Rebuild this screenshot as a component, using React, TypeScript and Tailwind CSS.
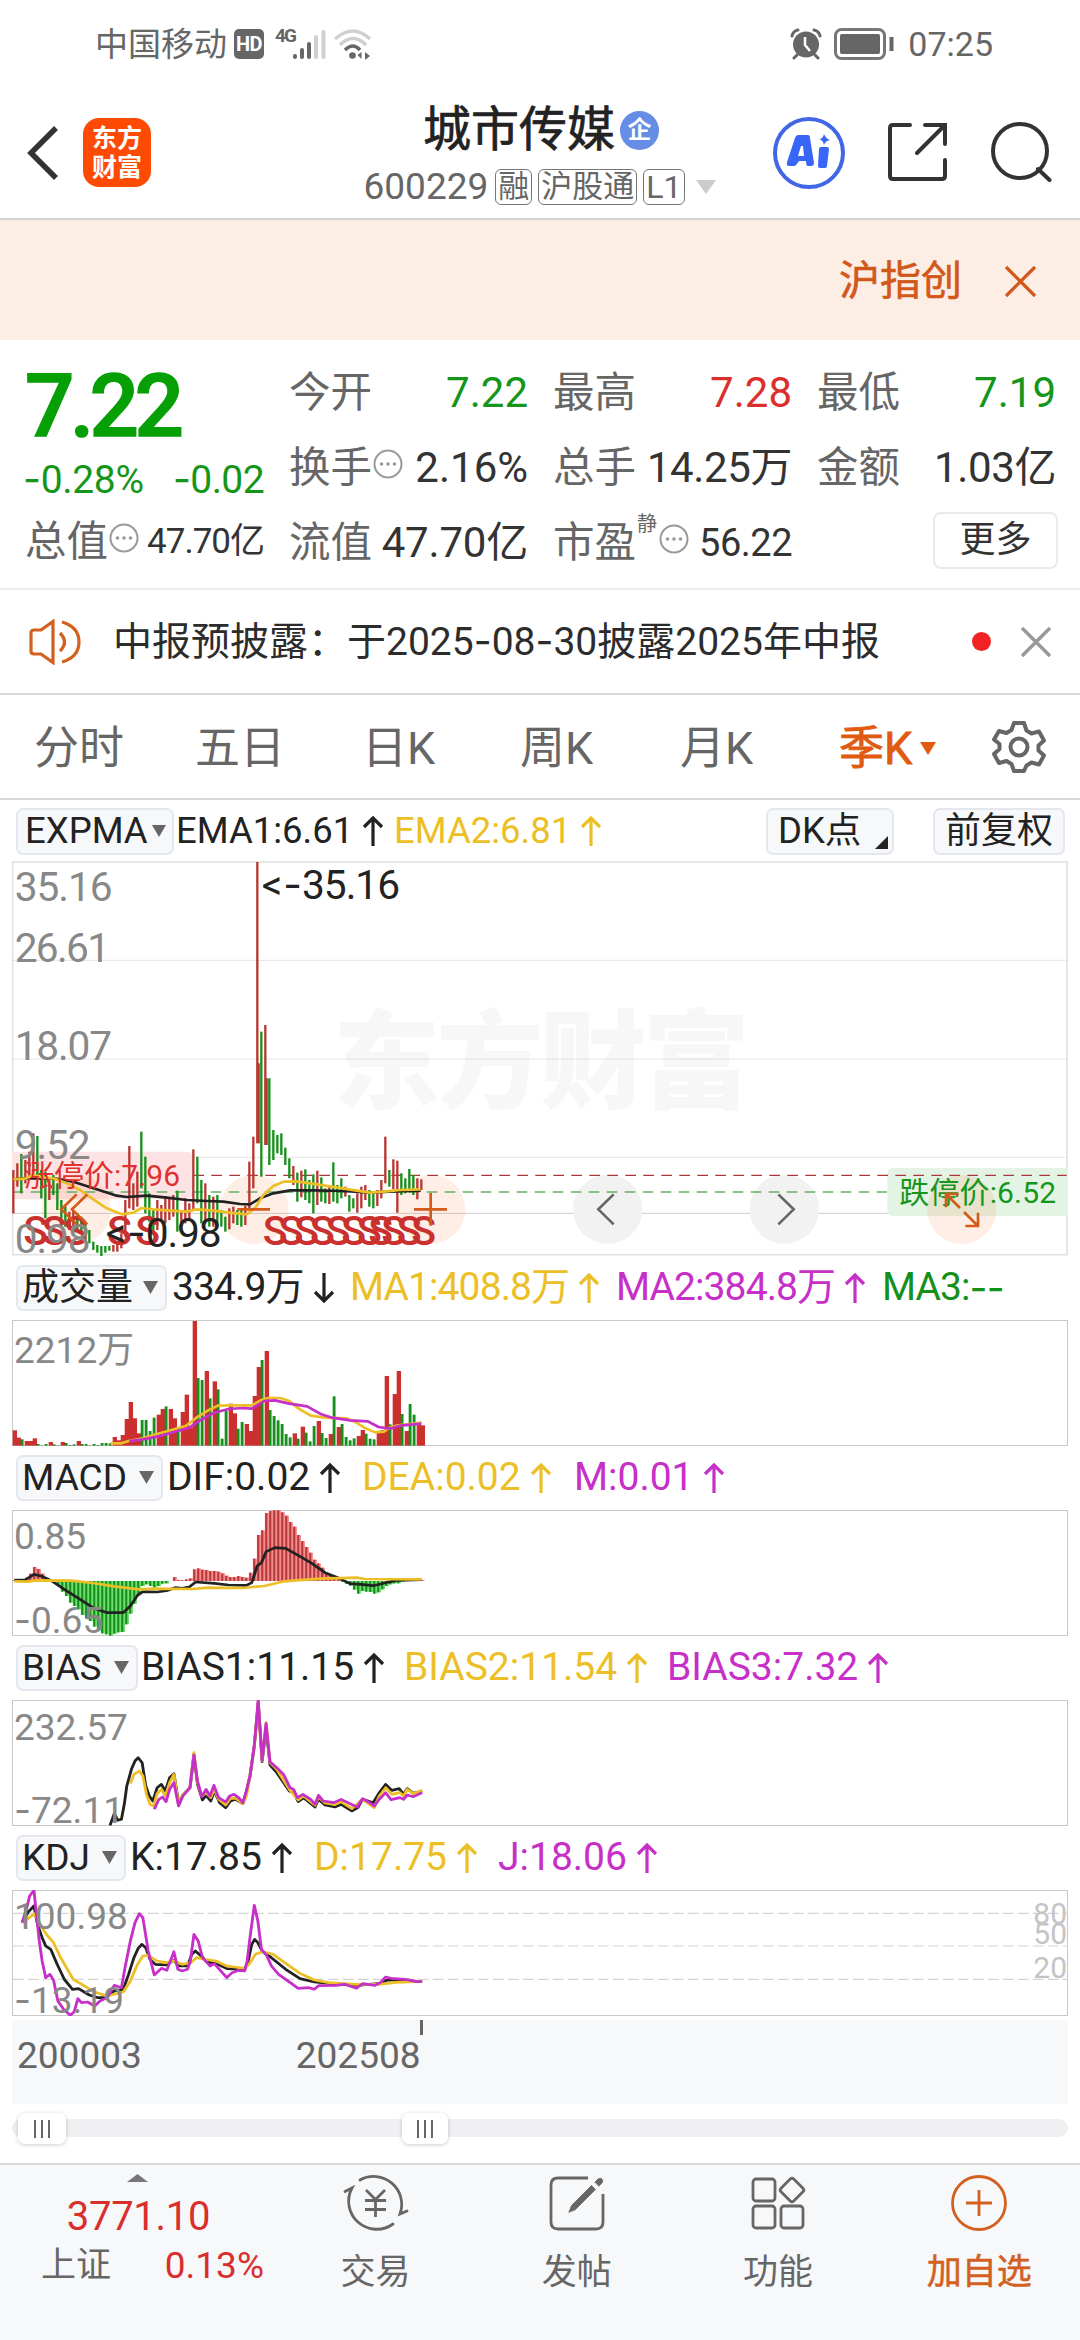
import React from "react";

const RED = "#c9302e";
const GREEN = "#15901a";
const YELLOW = "#ecbf27";
const PURPLE = "#c62fc8";
const BLACK = "#222222";

// quarterly candles: colour, high, low (chart units, 3 per pixel)
const CANDLES =
  "r960-1090 r940-1010 g912-1030 r930-1000 r905-985 r850-980 g858-985 g960-1045 g965-1105 r985-1050 g975-1035 g1000-1080 g1050-1130 g1070-1130 r1085-1140 r1080-1130 g1090-1140 g1100-1150 g1120-1170 g1140-1180 g1175-1200 g1185-1208 g1188-1218 g1188-1208 g1188-1202 r1185-1205 r1175-1205 r1150-1195 r1050-1160 r888-1075 r1000-1080 r965-1070 g845-1015 g920-1090 g1030-1115 g1080-1150 r1050-1140 r1065-1115 r1038-1120 r1045-1110 r1035-1100 g1022-1145 r1080-1130 r1045-1120 r1060-1110 r898-1080 g920-1060 g990-1120 r1000-1110 g1035-1130 r1040-1130 g1035-1125 g1080-1130 g1100-1145 r1075-1138 r1070-1120 g1080-1125 g1075-1130 r1068-1125 r935-1080 r860-1015 r36-880 g545-980 r525-885 g685-945 g840-930 g855-910 g850-915 g893-945 g925-985 r948-1005 g968-1055 r962-1042 g958-1050 g990-1060 g973-1090 r962-1065 g982-1055 g1015-1060 r1005-1062 g937-1055 g1005-1060 g985-1045 r1010-1040 g1035-1085 g1045-1075 r1030-1088 r1010-1075 r1005-1050 g1020-1070 g1030-1075 r1020-1068 r990-1045 r860-1000 g960-1010 r928-1018 r932-1088 g970-1035 g985-1030 g957-1018 g975-1035 r985-1048 r988-1020"
    .split(" ")
    .map((c) => {
      const [high, low] = c.slice(1).split("-").map(Number);
      return { up: c[0] === "r", high, low };
    });

const VOLUMES =
  "r508 r530 g535 r540 r540 r532 g549 g553 g549 r543 g550 g553 r543 g546 g552 g550 r540 g549 g549 g553 g549 g552 g546 g546 g547 r528 r538 r522 r474 r423 r472 r517 g477 g477 g510 g470 r461 r444 g436 r444 r472 g500 r453 r401 r500 r180 g351 g357 r330 g412 r361 g385 g533 g450 r428 r457 g503 g483 r489 r510 r405 r318 g297 r270 g447 g465 g478 g489 g519 g529 r517 g533 r497 g515 g541 g495 r480 g516 g531 r519 g406 r498 g489 g528 g538 g532 r525 r507 g518 g533 g535 r512 r507 r345 g490 r399 r330 g459 r510 g429 g461 r492 r493"
    .split(" ")
    .map((v) => ({ up: v[0] === "r", top: Number(v.slice(1)) }));

const MACD_BARS = [
  958, 956, 955, 950, 938, 918, 924, 938, 950, 956, 965, 975, 992, 1005, 1025, 1035, 1045, 1062, 1072, 1080, 1097, 1110,
  1117, 1120, 1124, 1118, 1114, 1113, 1090, 1058, 1028, 1000, 975, 970, 975, 980, 975, 968, 967, 960, 948, 957, 958, 955,
  952, 925, 922, 926, 927, 930, 930, 932, 937, 944, 948, 948, 945, 948, 950, 935, 893, 822, 808, 756, 750, 748, 748, 754,
  764, 783, 797, 822, 840, 858, 875, 896, 907, 920, 935, 942, 948, 955, 962, 968, 974, 986, 998, 990, 992, 993, 998, 994,
  985, 975, 970, 967, 967, 962, 958, 958, 958, 958, 958,
];

const EMA1 =
  "40,988 75,985 110,985 160,985 220,995 290,1018 350,1037 380,1041 440,1037 500,1043 560,1050 620,1053 670,1055 720,1062 750,1063 780,1045 820,1030 870,1021 940,1021 1030,1023 1110,1028 1180,1024 1262,1022";
const EMA2 =
  "40,988 75,986 100,975 125,982 160,985 200,1000 240,1020 280,1048 320,1075 365,1093 400,1088 425,1074 460,1078 510,1082 560,1085 590,1078 640,1082 680,1087 740,1093 765,1075 790,1035 820,1008 850,995 890,994 950,1003 1010,1012 1070,1022 1110,1028 1160,1024 1200,1020 1262,1018";
const VOL_MA1 =
  "310,547 340,547 360,540 400,532 430,522 480,507 520,495 550,470 580,450 610,434 650,433 705,433 730,418 750,411 785,411 810,420 835,442 870,464 910,470 970,472 995,483 1020,500 1050,514 1075,512 1090,500 1110,494 1140,490 1180,485";
const VOL_MA2 =
  "362,540 400,535 440,527 480,515 530,500 560,478 600,455 640,444 680,441 705,443 740,420 770,418 810,428 860,436 900,460 930,470 980,478 1030,481 1060,498 1090,503 1120,494 1180,488";
const DIF =
  "40,957 70,957 95,940 115,945 145,960 180,985 220,1012 260,1040 300,1055 345,1055 365,1035 385,1003 400,992 440,993 470,988 490,980 510,982 530,978 548,963 600,967 640,972 690,973 705,965 720,915 732,905 745,872 770,860 800,862 830,880 870,905 910,935 950,952 980,968 1010,970 1045,974 1080,965 1110,958 1180,956";
const DEA =
  "40,961 80,962 100,958 200,959 260,966 320,976 390,985 430,983 540,984 580,980 680,981 740,975 790,962 830,958 900,953 1000,950 1020,954 1180,955";
const BIAS1 =
  "308,553 320,518 330,538 340,535 348,490 355,435 368,385 378,360 387,350 398,365 408,435 418,465 428,480 440,440 452,430 463,450 475,410 487,398 500,485 512,462 532,440 543,340 553,430 567,477 577,463 590,480 600,450 615,485 632,500 645,480 660,475 680,488 690,450 700,405 712,315 723,185 734,362 745,260 756,372 775,395 810,450 822,455 835,482 850,470 882,498 892,475 910,492 938,498 955,490 985,510 1002,500 1015,475 1045,485 1062,455 1080,430 1097,448 1118,443 1130,460 1140,443 1158,457 1182,450";
const BIAS2 =
  "365,428 375,400 390,390 400,405 410,460 420,490 430,495 440,458 452,445 463,465 475,425 487,400 500,490 512,460 532,440 543,335 553,425 565,465 577,455 590,470 600,445 612,475 632,492 645,472 660,472 680,488 690,465 700,405 712,315 723,182 734,360 745,245 756,365 775,385 810,445 835,477 850,465 882,493 892,468 910,486 938,491 955,482 985,503 1015,475 1048,500 1062,465 1080,440 1097,460 1120,455 1130,465 1140,445 1158,458 1182,448";
const BIAS3 =
  "432,505 445,475 455,468 465,482 475,445 487,425 500,495 512,465 532,440 543,342 553,420 565,467 577,445 588,465 599,433 612,470 632,483 643,465 655,460 668,470 680,485 690,450 700,405 712,315 723,178 734,358 745,248 756,362 775,380 795,402 812,440 822,445 833,470 848,460 870,475 882,490 892,463 905,480 935,485 955,475 980,488 1000,498 1015,473 1035,485 1048,495 1062,475 1080,455 1095,476 1120,470 1130,475 1140,462 1158,467 1182,455";
const KDJ_K =
  "62,845 80,812 95,795 105,850 118,890 128,915 142,925 160,970 180,1015 203,1045 220,1043 250,1062 275,1070 295,1070 320,1050 345,1045 360,1000 375,950 387,922 397,910 408,920 420,955 435,970 465,972 487,958 500,975 525,975 537,940 547,930 560,942 580,962 610,970 635,983 685,985 695,960 705,910 713,895 722,905 735,932 760,950 800,985 840,1013 880,1023 930,1028 998,1033 1060,1028 1085,1017 1120,1018 1182,1022";
const KDJ_D =
  "62,845 75,835 97,818 112,850 130,880 150,905 170,950 205,1015 240,1037 265,1053 300,1065 345,1053 365,1020 385,970 400,945 415,943 440,960 465,965 487,960 510,970 535,965 550,950 575,955 605,960 635,975 685,982 697,970 715,940 735,932 765,940 800,967 840,997 880,1017 920,1025 998,1030 1060,1030 1110,1024 1182,1021";
const KDJ_J =
  "62,845 75,800 83,765 95,748 103,830 110,900 118,960 128,1010 140,1000 150,1018 162,1080 178,1105 197,1123 208,1112 218,1073 228,1085 245,1083 265,1095 280,1080 300,1070 320,1033 340,1040 350,980 365,900 378,845 390,818 400,830 415,930 432,1002 452,982 467,988 487,932 498,985 510,990 525,985 533,960 543,880 555,900 567,950 588,975 600,968 620,992 635,1010 650,995 668,988 685,990 692,960 700,890 712,793 722,840 732,925 745,940 760,975 780,1000 800,1015 835,1042 865,1040 880,1045 892,1034 940,1033 965,1030 998,1042 1015,1028 1050,1033 1065,1025 1080,1008 1095,1012 1140,1016 1165,1022 1182,1022";

// Roboto's hyphen is too short for prices, so it is taken from Inter
function Num({ children }: { children: string }) {
  return (
    <>
      {children.split(/(-)/).map((part, i) =>
        part === "-" ? (
          <span key={i} className="font-['Inter']">
            -
          </span>
        ) : (
          part
        )
      )}
    </>
  );
}

function StatusBar() {
  return (
    <div className="flex h-[88px] items-center justify-between pl-[95px] pr-[87px] text-[#666]">
      <div className="flex items-center">
        <span className="text-[33px] leading-none">中国移动</span>
        <span className="ml-[7px] flex h-[30px] w-[30px] items-center justify-center rounded-[5px] bg-[#666] text-[20px] font-bold leading-none tracking-[-0.5px] text-white">
          HD
        </span>
        <span className="-mt-[17px] ml-[11px] w-[18px] text-[19px] font-bold leading-none tracking-[-2px]">4G</span>
        <svg width="34" height="32" viewBox="0 0 34 32" className="-mt-px" strokeWidth="4" strokeLinecap="round">
          <path d="M2 29v-1M9 29v-7M16 29V16" stroke="#666" />
          <path d="M23 29V9M30.500 29V4" stroke="#d0d0d0" />
        </svg>
        <svg width="40" height="34" viewBox="0 0 40 34" className="ml-[6px]" fill="none" strokeWidth="3.500">
          <path d="M2 12Q20 -4 37 12" stroke="#d0d0d0" />
          <path d="M7 18Q20 5 33 18" stroke="#d0d0d0" />
          <path d="M12 23Q20 15 27 23" stroke="#666" />
          <circle cx="19.500" cy="28.500" r="3.300" fill="#666" />
          <path d="M28.500 25v7l-4-4zM32 33v-8l5 4z" fill="#666" />
        </svg>
      </div>
      <div className="flex items-center">
        <svg width="32" height="32" viewBox="0 0 32 32">
          <circle cx="16" cy="16.500" r="13" fill="#666" />
          <path d="M2 8Q3 3 8 2M30 8Q29 3 24 2M7 27l-3 3M25 27l3 3" stroke="#666" strokeWidth="3" fill="none" strokeLinecap="round" />
          <path d="M15 9v8l5 6" stroke="#fff" strokeWidth="2.500" fill="none" />
        </svg>
        <svg width="62" height="32" viewBox="0 0 62 32" className="ml-[12px]">
          <rect x="1.500" y="1.500" width="49" height="29" rx="6" fill="none" stroke="#777" strokeWidth="3" />
          <rect x="6" y="6" width="40" height="20" rx="2" fill="#666" />
          <path d="M57.500 9v14" stroke="#666" strokeWidth="4" />
        </svg>
        <span className="ml-[12px] text-[34px] leading-none">07:25</span>
      </div>
    </div>
  );
}

function Header() {
  return (
    <div className="flex h-[132px] border-b-2 border-[#d3d3d6]">
      <div className="flex w-[308px] pl-[27px]">
        <svg width="32" height="56" viewBox="0 0 32 56" className="mt-[37px]">
          <path d="M29 3L4 28l25 25" fill="none" stroke="#333" strokeWidth="5.500" />
        </svg>
        <div className="ml-[24px] mt-[30px] flex h-[69px] w-[68px] flex-col items-center justify-center rounded-[16px] bg-[#fd4a05] text-[25px] font-bold leading-[29px] text-white">
          <span>东方</span>
          <span>财富</span>
        </div>
      </div>
      <div className="flex flex-1 flex-col items-center">
        <div className="ml-[2px] mt-[18px] flex items-center">
          <span className="text-[48px] leading-none text-[#222] [-webkit-text-stroke:0.7px_#222]">城市传媒</span>
          <span className="ml-[5px] flex h-[39px] w-[39px] items-center justify-center rounded-full bg-[#658de6] text-[24px] font-bold leading-none text-white">
            企
          </span>
        </div>
        <div className="mt-[14px] flex items-center whitespace-nowrap text-[#666]">
          <span className="text-[37px] leading-none">600229</span>
          <span className="ml-[7px] flex h-[36px] items-center rounded-[6px] border border-[#777] px-[2px] text-[31px] leading-none">融</span>
          <span className="ml-[6px] flex h-[36px] items-center rounded-[6px] border border-[#777] px-[2px] text-[31px] leading-none">沪股通</span>
          <span className="ml-[6px] flex h-[36px] items-center rounded-[6px] border border-[#777] px-[2px] text-[32px] leading-none">L1</span>
          <svg width="22" height="14" viewBox="0 0 22 14" className="ml-[10px]">
            <path d="M1 0h20L11 14z" fill="#ccc" />
          </svg>
        </div>
      </div>
      <div className="flex w-[308px]">
        <svg width="72" height="72" viewBox="0 0 72 72" className="ml-px mt-[29px]">
          <circle cx="36" cy="36" r="34" fill="none" stroke="#4267e4" strokeWidth="4" />
          <path d="M25 18h10q2 0 2 3l4 25q0 3-3 3h-3q-2 0-2-5h-7q-3 5-5 5h-5q-3 0-2-4l8-24q1-3 3-3zM28 29l-3 10h6l-1-10z" fill="#3a66f8" fillRule="evenodd" />
          <path d="M48 30h6q2 0 2 2l-2 17q0 2-2 2h-5q-2 0-2-2l1-17q0-2 2-2zM51 17q2 5 6 6q-5 1-6 5q-1-5-5-6q4 0 5-5z" fill="#3a66f8" />
        </svg>
        <svg width="60" height="60" viewBox="0 0 60 60" className="ml-[42px] mt-[34px]" fill="none" stroke="#333" strokeWidth="4" strokeLinecap="round">
          <path d="M23 3H6Q3 3 3 6v48q0 3 3 3h49q3 0 3-3V38M38 3h20v19M57 4L30 31" />
        </svg>
        <svg width="62" height="62" viewBox="0 0 62 62" className="ml-[43px] mt-[33px]" fill="none" stroke="#333" strokeWidth="4" strokeLinecap="round">
          <circle cx="30" cy="30" r="27" />
          <path d="M48 48l11.500 11" />
        </svg>
      </div>
    </div>
  );
}

function Banner() {
  return (
    <div className="flex h-[120px] items-center justify-end bg-[#fceee5] pr-[43px] pt-[2px] text-[#d2581a]">
      <span className="text-[41px] leading-none [-webkit-text-stroke:0.6px_#d2581a]">沪指创</span>
      <svg width="33" height="33" viewBox="0 0 33 33" className="ml-[42px]">
        <path d="M2 2l29 29M31 2L2 31" stroke="#d2581a" strokeWidth="3.200" />
      </svg>
    </div>
  );
}

function Dots() {
  return (
    <svg width="30" height="30" viewBox="0 0 30 30" className="-mt-[8px] ml-px shrink-0">
      <circle cx="15" cy="15" r="13.500" fill="none" stroke="#999" strokeWidth="2" />
      <circle cx="8.500" cy="15" r="1.800" fill="#999" />
      <circle cx="15" cy="15" r="1.800" fill="#999" />
      <circle cx="21.500" cy="15" r="1.800" fill="#999" />
    </svg>
  );
}

type CellProps = { label: string; value: string; valueClass: string; dots?: boolean; sup?: string };

function Cell({ label, value, valueClass, dots, sup }: CellProps) {
  return (
    <div className="flex items-center whitespace-nowrap">
      <span className="text-[41.500px] leading-none text-[#666]">{label}</span>
      {sup && <span className="-mt-[38px] ml-px w-[21px] text-[20px] leading-none text-[#666]">{sup}</span>}
      {dots && <Dots />}
      <span className={`ml-auto leading-none ${valueClass}`}>{value}</span>
    </div>
  );
}

function Quote() {
  return (
    <div className="flex h-[250px] border-b-2 border-[#ececee]">
      <div className="w-[264px] pl-[25px]">
        <div className="flex h-[114px] items-center pt-[18px] text-[87px] font-medium leading-none tracking-[-4.500px] text-[#06a006] [-webkit-text-stroke:1.500px_#06a006]">
          7.22
        </div>
        <div className="flex h-[50px] items-center justify-between text-[39px] leading-none tracking-[-0.300px] text-[#15961a]">
          <span className="-ml-[2px]">
            <Num>-0.28%</Num>
          </span>
          <span className="tracking-[-0.600px]">
            <Num>-0.02</Num>
          </span>
        </div>
        <div className="grid h-[75px]">
          <Cell label="总值" value="47.70亿" valueClass="text-[35px] tracking-[-1px] text-[#333]" dots />
        </div>
      </div>
      <div className="ml-[25px] mt-[15px] grid h-[225px] w-[767px] grid-cols-3 grid-rows-3 gap-x-[25px]">
        <Cell label="今开" value="7.22" valueClass="text-[42px] text-[#15961a]" />
        <Cell label="最高" value="7.28" valueClass="text-[42px] text-[#dc2f2c]" />
        <Cell label="最低" value="7.19" valueClass="text-[42px] text-[#15961a]" />
        <Cell label="换手" value="2.16%" valueClass="text-[42px] text-[#333]" dots />
        <Cell label="总手" value="14.25万" valueClass="text-[42px] tracking-[-0.400px] text-[#333]" />
        <Cell label="金额" value="1.03亿" valueClass="text-[42px] tracking-[-0.400px] text-[#333]" />
        <Cell label="流值" value="47.70亿" valueClass="text-[42px] tracking-[-0.200px] text-[#333]" />
        <Cell label="市盈" value="56.22" valueClass="text-[38px] tracking-[-0.500px] text-[#333]" dots sup="静" />
        <div className="-mr-[2px] -mt-[5px] ml-auto flex h-[57px] w-[125px] items-center justify-center self-center rounded-[8px] border-2 border-[#e8ebeb] text-[36px] leading-none text-[#333]">
          更多
        </div>
      </div>
    </div>
  );
}

function Notice() {
  return (
    <div className="flex h-[105px] items-center border-b-2 border-[#dadadc]">
      <svg width="52" height="46" viewBox="0 0 52 46" className="ml-[29px] shrink-0" fill="none" stroke="#d4601f" strokeWidth="3.200">
        <path d="M24 2.500v41L12 35H5q-3 0-3-3V14q0-3 3-3h7zM31 14q9 9 0 18M33 3q17 5 17 20T33 43" />
      </svg>
      <span className="ml-[32px] whitespace-nowrap text-[39px] leading-none text-[#2c2c2c]">
        <Num>中报预披露：于2025-08-30披露2025年中报</Num>
      </span>
      <span className="ml-auto h-[19px] w-[19px] rounded-full bg-[#f02222]" />
      <svg width="32" height="32" viewBox="0 0 32 32" className="ml-[29px] mr-[28px]">
        <path d="M2 2l28 28M30 2L2 30" stroke="#999" strokeWidth="3.500" />
      </svg>
    </div>
  );
}

const PERIODS = [
  { name: "分时", width: 161 },
  { name: "五日", width: 167 },
  { name: "日K", width: 158 },
  { name: "周K", width: 160 },
  { name: "月K", width: 159 },
];

function Periods() {
  return (
    <div className="flex h-[105px] items-center border-b-2 border-[#dadadc] pl-[34px] pt-[3px] text-[45px] leading-none text-[#666]">
      {PERIODS.map((period) => (
        <span key={period.name} style={{ width: period.width }}>
          {period.name}
        </span>
      ))}
      <span className="text-[#e05a10] [-webkit-text-stroke:0.8px_#e05a10]">季K</span>
      <svg width="16" height="13" viewBox="0 0 16 13" className="ml-[8px]">
        <path d="M0 0h16L8 13z" fill="#e05a10" />
      </svg>
      <svg width="54" height="54" viewBox="0 0 54 54" className="-mt-[3px] ml-auto mr-[34px]" fill="none" stroke="#666" strokeWidth="4" strokeLinejoin="round">
        <path d="M22 3h10l2.500 7.500 5 3 7.500-2 5 9-5.500 5v5l5.500 5-5 9-7.500-2-5 3L32 51H22l-2.500-7-5-3-7.500 2-5-9L7.500 29v-5L2 19.500l5-8.500 7.500 2 5-3z" />
        <circle cx="27" cy="27" r="8.500" />
      </svg>
    </div>
  );
}

function Arrow({ down }: { down?: boolean }) {
  return (
    <svg width="22" height="32" viewBox="0 0 22 32" className={`ml-[9px] shrink-0 ${down ? "rotate-180" : ""}`} fill="none" stroke="currentColor" strokeWidth="3.200">
      <path d="M11 31V3M2 12L11 3l9 9" />
    </svg>
  );
}

type Reading = { text: string; at: number; color: string; arrow?: "up" | "down" };
type IndicatorBarProps = { name: string; width: number; readings: Reading[]; tight?: boolean };

// `at` is where the reading starts, `width` is that of the selector button
function IndicatorBar({ name, width, readings, tight }: IndicatorBarProps) {
  return (
    <div className="flex h-[64px] items-center whitespace-nowrap pb-[1px] pl-[16px] text-[39px] leading-none">
      <div className="flex h-[46px] shrink-0 items-center justify-between rounded-[7px] border-2 border-[#e4e8ee] bg-[#f7f8fa] pl-[4px] pr-[7px] text-[37px] text-[#222]" style={{ width }}>
        {name}
        <svg width="15" height="13" viewBox="0 0 15 13">
          <path d="M0 0h15L7.500 13z" fill="#666" />
        </svg>
      </div>
      {readings.map((r, i) => (
        <div
          key={r.text}
          className={`flex shrink-0 items-center ${tight ? "tracking-[-0.900px]" : ""}`}
          style={{ color: r.color, marginLeft: i === 0 ? r.at - 16 - width : 0, width: i < readings.length - 1 ? readings[i + 1].at - r.at : "auto" }}
        >
          <Num>{r.text}</Num>
          {r.arrow && <Arrow down={r.arrow === "down"} />}
        </div>
      ))}
    </div>
  );
}

function MainChart() {
  return (
    <div className="px-[12px]">
      <svg width="1056" height="395" viewBox="36 33 3168 1185" className="block">
        <text x="1000" y="750" textLength="1250" className="text-[320px] font-black" fill="#f7f7f7">
          东方财富
        </text>
        <rect x="38" y="36" width="3163" height="1178" fill="none" stroke="#e2e2e2" strokeWidth="5" />
        <path d="M38 331H3200M38 627H3200M38 922H3200" stroke="#ccc" strokeWidth="3" strokeDasharray="4 4" />
        <path d="M38 1090H3200" stroke="#ccc" strokeWidth="3" />
        <path d="M36 905H560q18 0 18 18V1030q0 18-18 18H36z" fill="#fde3e4" />
        <path d="M3204 954H2680q-18 0-18 18V1080q0 18 18 18H3204z" fill="#e4f4e4" />
        {[229, 762, 1292, 2885].map((x) => (
          <circle key={x} cx={x} cy="1078" r="104" fill="#fd8a4a" fillOpacity="0.14" />
        ))}
        {[1823, 2353].map((x) => (
          <circle key={x} cx={x} cy="1078" r="104" fill="#f2f2f2" />
        ))}
        <path d="M580 976H3200" stroke="#a8383c" strokeWidth="4" strokeDasharray="32 22" />
        <path d="M38 1026H2660" stroke="#63b165" strokeWidth="4" strokeDasharray="32 22" />
        {CANDLES.map((c, i) => (
          <path key={i} d={`M${40 + i * 12} ${c.high}V${c.low}`} stroke={c.up ? "#b93632" : GREEN} strokeWidth="7" />
        ))}
        <path d="M775 640V880M799 685V885" stroke="#b93632" strokeWidth="9" />
        <g fill={RED} className="text-[123px] font-medium">
          <text y="1185" x="70 125 190">
            SSS
          </text>
          <text y="1185" x="321 406">
            SS
          </text>
          <text y="1185" x="788 836 883 930 977 1024 1071 1105 1144 1190 1234">
            SSSSSSSSSSS
          </text>
        </g>
        <g fill="none" strokeWidth="8" strokeLinejoin="round">
          <polyline points={EMA1} stroke={BLACK} />
          <polyline points={EMA2} stroke={YELLOW} />
        </g>
        <text x="72" y="1008" textLength="468" fill="#e0312f" className="text-[90px]">
          涨停价:7.96
        </text>
        <text x="2698" y="1060" textLength="470" fill="#17961c" className="text-[90px]">
          跌停价:6.52
        </text>
        <g fill="#888" className="text-[122px]">
          <text x="44" y="154" textLength="294">35.16</text>
          <text x="44" y="337" textLength="286">26.61</text>
          <text x="44" y="630" textLength="292">18.07</text>
          <text x="44" y="926" textLength="228">9.52</text>
          <text x="44" y="1208" textLength="228">0.98</text>
        </g>
        <g fill="#222" className="text-[122px]">
          <text x="785" y="148">
            &lt;
          </text>
          <text x="850" y="148" className="font-['Inter']">
            -
          </text>
          <text x="906" y="148" textLength="294">
            35.16
          </text>
          <text x="317" y="1192">
            &lt;
          </text>
          <text x="381" y="1192" className="font-['Inter']">
            -
          </text>
          <text x="437" y="1192" textLength="228">
            0.98
          </text>
        </g>
        <g fill="none" stroke="#d35a18" strokeWidth="8">
          <path d="M230 1033l-46 45 46 45M262 1033l-46 45 46 45M712 1078h98M1242 1078h99M1292 1029v98" />
          <path d="M2838 1072v-40h38M2838 1032l42 42M2934 1088v40h-38M2934 1128l-42-42" />
        </g>
        <path d="M1841 1033l-46 45 46 45M2335 1033l46 45-46 45" fill="none" stroke="#666" strokeWidth="8" />
      </svg>
    </div>
  );
}

type SubChartProps = { top: string; topClass: string; bottom?: string; offset: number; children: React.ReactNode };

// the lower panels share one x scale; offset is the y origin of the panel's data
function SubChart({ top, topClass, bottom, offset, children }: SubChartProps) {
  return (
    <div className="relative mx-[12px] h-[126px] text-[37px] leading-none text-[#888]">
      <svg width="1056" height="126" viewBox={`33.6 ${offset} 2956.8 378`} preserveAspectRatio="none" className="block">
        <rect x="35" y={offset + 1.5} width="2954" height="375" fill="none" stroke="#c8c8c8" strokeWidth="3" />
        {children}
      </svg>
      <span className={`absolute left-[2px] ${topClass}`}>{top}</span>
      {bottom && (
        <span className="absolute -bottom-[3px] left-[2px]">
          <Num>{bottom}</Num>
        </span>
      )}
    </div>
  );
}

function Line({ points, color }: { points: string; color: string }) {
  return <polyline points={points} fill="none" stroke={color} strokeWidth="8" strokeLinejoin="round" />;
}

function Handle({ className }: { className: string }) {
  return (
    <div className={`absolute -top-[6px] flex h-[31px] items-center justify-center gap-[5px] rounded-[7px] bg-white shadow-[0_1px_4px_rgba(0,0,0,0.2)] ${className}`}>
      <i className="h-[18px] w-[2px] bg-[#666]" />
      <i className="h-[18px] w-[2px] bg-[#666]" />
      <i className="h-[18px] w-[2px] bg-[#666]" />
    </div>
  );
}

function TimeAxis() {
  return (
    <>
      <div className="relative mx-[12px] mt-[4px] flex h-[84px] pl-[5px] pt-[17px] text-[37px] leading-none text-[#666]">
        <div className="absolute inset-0 -z-10 bg-[#f7f8fa]" />
        <span>200003</span>
        <span className="ml-[154px]">202508</span>
        <i className="absolute left-[408px] top-0 h-[15px] w-[3px] bg-[#666]" />
      </div>
      <div className="relative mx-[12px] mt-[15px] h-[18px] rounded-full bg-[#f0f0f2]">
        <Handle className="left-[6px] w-[48px]" />
        <Handle className="left-[390px] w-[46px]" />
      </div>
    </>
  );
}

function TabItem({ label, active, children }: { label: string; active?: boolean; children: React.ReactNode }) {
  return (
    <div className={`flex flex-1 flex-col items-center pt-[8px] ${active ? "text-[#d2601f]" : "text-[#666]"}`}>
      <svg width="66" height="62" viewBox="0 0 66 62" fill="none" stroke="currentColor" strokeWidth="2.800" strokeLinecap="round">
        {children}
      </svg>
      <span className={`mt-[20px] text-[35px] leading-none ${active ? "[-webkit-text-stroke:0.5px_#d2601f]" : ""}`}>{label}</span>
    </div>
  );
}

function TabBar() {
  return (
    <div className="mt-[26px] flex h-[178px] border-t-2 border-[#d8d8da] bg-[#f7f8fa]">
      <div className="flex w-[275px] flex-col items-center pt-[9px]">
        <svg width="21" height="8" viewBox="0 0 21 8">
          <path d="M0 8L10.500 0 21 8z" fill="#77777b" />
        </svg>
        <span className="ml-[2px] mt-[15px] text-[40px] leading-none tracking-[-0.300px] text-[#d92f2c]">3771.10</span>
        <div className="mt-[10px] flex w-full items-center justify-between pl-[41px] pr-[11px] text-[35px] leading-none">
          <span className="text-[#666]">上证</span>
          <span className="text-[37px] text-[#d92f2c]">0.13%</span>
        </div>
      </div>
      <TabItem label="交易">
        <path d="M17 7a28 28 0 0 1 40 34l7-3M50 51A28 28 0 0 1 9 15l-7 3.500" />
        <path d="M23 17l9.500 9.500 9.500-9.500M22 27.500h21M22 36.500h21M32.500 27v17" strokeLinecap="butt" />
      </TabItem>
      <TabItem label="发帖">
        <path d="M44 5H14q-7 0-7 7v37q0 7 7 7h38q7 0 7-7V21" strokeLinecap="butt" />
        <path d="M25 39l2.500-6.500 20-20 4 4-20 20zM51 9l3-3q2.500-1.500 4 0t0 4l-3 3z" fill="currentColor" strokeWidth="0.800" />
      </TabItem>
      <TabItem label="功能">
        <rect x="8" y="6" width="22" height="22" rx="3" />
        <rect x="8" y="33" width="22" height="22" rx="3" />
        <rect x="36" y="33" width="22" height="22" rx="3" />
        <rect x="38" y="8" width="18" height="18" rx="2.500" transform="rotate(45 47 17)" />
      </TabItem>
      <TabItem label="加自选" active>
        <circle cx="33" cy="30" r="26.500" />
        <path d="M33 17v26M20 30h26" strokeLinecap="butt" />
      </TabItem>
    </div>
  );
}

export default function App() {
  return (
    <div className="relative z-0 h-[2340px] w-[1080px] overflow-hidden bg-white font-['Roboto','Noto_Sans_CJK_SC',sans-serif]">
      <StatusBar />
      <Header />
      <Banner />
      <Quote />
      <Notice />
      <Periods />

      <div className="flex h-[61px] items-center whitespace-nowrap pl-[16px] pt-px text-[36.500px] leading-none text-[#222]">
        <div className="flex h-[47px] w-[158px] items-center justify-between rounded-[7px] border-2 border-[#e4e8ee] bg-[#f7f8fa] pl-[7px] pr-[6px]">
          EXPMA
          <svg width="14" height="12" viewBox="0 0 14 12">
            <path d="M0 0h14L7 12z" fill="#666" />
          </svg>
        </div>
        <div className="ml-[2px] flex w-[218px] items-center">
          EMA1:6.61
          <Arrow />
        </div>
        <div className="flex items-center text-[#ecbf27]">
          EMA2:6.81
          <Arrow />
        </div>
        <div className="relative ml-auto flex h-[47px] w-[128px] items-center rounded-[7px] border-2 border-[#e4e8ee] bg-[#f7f8fa] pl-[10px]">
          DK点
          <svg width="13" height="13" viewBox="0 0 13 13" className="absolute bottom-[4px] right-[4px]">
            <path d="M13 0v13H0z" fill="#222" />
          </svg>
        </div>
        <div className="ml-[39px] mr-[15px] flex h-[47px] w-[132px] items-center justify-center rounded-[7px] border-2 border-[#e4e8ee] bg-[#f7f8fa] text-[36px]">
          前复权
        </div>
      </div>
      <MainChart />

      <IndicatorBar
        name="成交量"
        width={151}
        tight
        readings={[
          { text: "334.9万", at: 172, color: BLACK, arrow: "down" },
          { text: "MA1:408.8万", at: 350, color: YELLOW, arrow: "up" },
          { text: "MA2:384.8万", at: 616, color: PURPLE, arrow: "up" },
          { text: "MA3:--", at: 882, color: "#15901a" },
        ]}
      />
      <SubChart top="2212万" topClass="top-[12px]" offset={177}>
        {VOLUMES.map((v, i) => (
          <rect key={i} x={35.5 + i * 11.2} y={v.top} width={v.up ? 12.2 : 8} height={554 - v.top} fill={v.up ? "#cb2f2e" : GREEN} />
        ))}
        <Line points={VOL_MA1} color={YELLOW} />
        <Line points={VOL_MA2} color={PURPLE} />
      </SubChart>

      <IndicatorBar
        name="MACD"
        width={147}
        readings={[
          { text: "DIF:0.02", at: 167, color: BLACK, arrow: "up" },
          { text: "DEA:0.02", at: 362, color: YELLOW, arrow: "up" },
          { text: "M:0.01", at: 574, color: PURPLE, arrow: "up" },
        ]}
      />
      <SubChart top="0.85" topClass="top-[8px]" bottom="-0.65" offset={747}>
        {MACD_BARS.map((y, i) => {
          const up = y < 960;
          const x = 36 + i * 11.2;
          const top = Math.min(y, 960);
          const height = Math.abs(y - 960);
          return (
            <g key={i}>
              <rect x={x} y={top} width="11.200" height={height} fill={up ? "#f58080" : "#62d862"} />
              <rect x={x + 1} y={top} width="5.500" height={height} fill={up ? "#b83a3a" : "#15901a"} />
            </g>
          );
        })}
        <Line points={DIF} color={BLACK} />
        <Line points={DEA} color={YELLOW} />
      </SubChart>

      <IndicatorBar
        name="BIAS"
        width={122}
        readings={[
          { text: "BIAS1:11.15", at: 141, color: BLACK, arrow: "up" },
          { text: "BIAS2:11.54", at: 404, color: YELLOW, arrow: "up" },
          { text: "BIAS3:7.32", at: 667, color: PURPLE, arrow: "up" },
        ]}
      />
      <SubChart top="232.57" topClass="top-[9px]" bottom="-72.11" offset={177}>
        <Line points={BIAS1} color={BLACK} />
        <Line points={BIAS2} color={YELLOW} />
        <Line points={BIAS3} color={PURPLE} />
      </SubChart>

      <IndicatorBar
        name="KDJ"
        width={110}
        readings={[
          { text: "K:17.85", at: 130, color: BLACK, arrow: "up" },
          { text: "D:17.75", at: 314, color: YELLOW, arrow: "up" },
          { text: "J:18.06", at: 498, color: PURPLE, arrow: "up" },
        ]}
      />
      <div className="relative">
        <SubChart top="100.98" topClass="top-[8px]" bottom="-13.19" offset={747}>
          <path d="M36 817H2990M36 915H2990M36 1015H2990" stroke="#d4d4d4" strokeWidth="3.500" strokeDasharray="30 12" />
          <Line points={KDJ_K} color={BLACK} />
          <Line points={KDJ_D} color={YELLOW} />
          <Line points={KDJ_J} color={PURPLE} />
        </SubChart>
        <div className="absolute right-[13px] top-[9px] flex flex-col text-[30px] leading-none text-[#c4c4c4]">
          <span className="h-[20px]">80</span>
          <span className="h-[34px]">50</span>
          <span>20</span>
        </div>
      </div>

      <TimeAxis />
      <TabBar />
    </div>
  );
}
